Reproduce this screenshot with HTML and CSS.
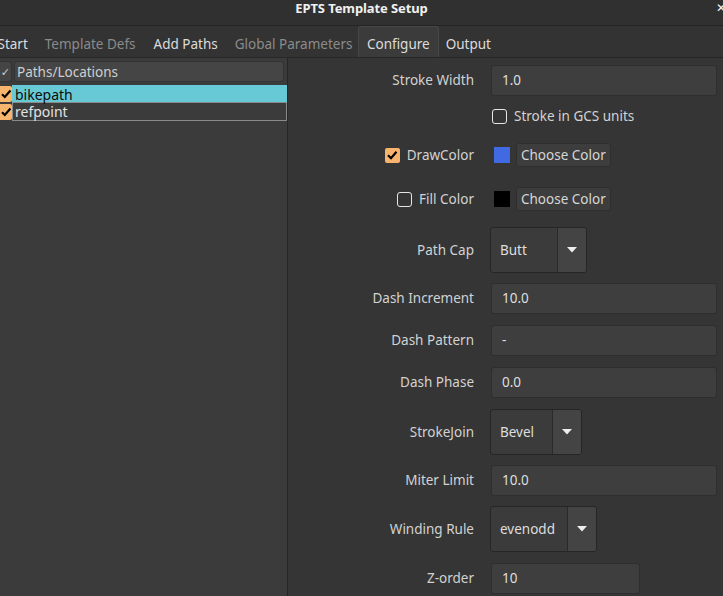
FILE: index.html
```html
<!DOCTYPE html>
<html>
<head>
<meta charset="utf-8">
<link rel="stylesheet" href="styles.css">
</head>
<body>
<div class="window">
  <div class="titlebar">
    <span></span>
    <span class="title">EPTS Template Setup</span>
    <span class="close">✕</span>
  </div>
  <div class="tabbar">
    <span class="tab">Start</span>
    <span class="tab disabled">Template Defs</span>
    <span class="tab">Add Paths</span>
    <span class="tab disabled">Global Parameters</span>
    <span class="tab active">Configure</span>
    <span class="tab">Output</span>
  </div>
  <div class="content">
    <div class="left">
      <div class="thead">
        <div class="th-check">✓</div>
        <div class="th-name">Paths/Locations</div>
      </div>
      <div class="trow">
        <div class="cell-check"><svg viewBox="0 0 12 12" width="12" height="12"><path d="M2 6.2 L4.8 9 L10.5 2.5" fill="none" stroke="#000" stroke-width="2.2"/></svg></div>
        <div class="cell-name selected">bikepath</div>
      </div>
      <div class="trow">
        <div class="cell-check"><svg viewBox="0 0 12 12" width="12" height="12"><path d="M2 6.2 L4.8 9 L10.5 2.5" fill="none" stroke="#000" stroke-width="2.2"/></svg></div>
        <div class="cell-name">refpoint</div>
      </div>
    </div>
    <div class="right">
      <div class="form">
        <div class="lbl">Stroke Width</div>
        <div class="fld"><div class="input wide">1.0</div></div>

        <div class="lbl"></div>
        <div class="fld"><span class="cb"></span><span class="cb-text">Stroke in GCS units</span></div>

        <div class="lbl"><span class="cb on"><svg viewBox="0 0 14 14" width="14" height="14"><path d="M3 7.2 L6 10.2 L11.5 3.8" fill="none" stroke="#000" stroke-width="2.2"/></svg></span><span class="cb-text">DrawColor</span></div>
        <div class="fld"><span class="swatch blue"></span><span class="btn">Choose Color</span></div>

        <div class="lbl"><span class="cb"></span><span class="cb-text">Fill Color</span></div>
        <div class="fld"><span class="swatch black"></span><span class="btn">Choose Color</span></div>

        <div class="lbl">Path Cap</div>
        <div class="fld"><div class="combo"><span class="combo-text w-butt">Butt</span><span class="combo-arrow"><svg width="10" height="6" viewBox="0 0 10 6"><path d="M0 0 H10 L5 5.5 Z" fill="#eee"/></svg></span></div></div>

        <div class="lbl">Dash Increment</div>
        <div class="fld"><div class="input wide">10.0</div></div>

        <div class="lbl">Dash Pattern</div>
        <div class="fld"><div class="input wide">-</div></div>

        <div class="lbl">Dash Phase</div>
        <div class="fld"><div class="input wide">0.0</div></div>

        <div class="lbl">StrokeJoin</div>
        <div class="fld"><div class="combo"><span class="combo-text w-bevel">Bevel</span><span class="combo-arrow"><svg width="10" height="6" viewBox="0 0 10 6"><path d="M0 0 H10 L5 5.5 Z" fill="#eee"/></svg></span></div></div>

        <div class="lbl">Miter Limit</div>
        <div class="fld"><div class="input wide">10.0</div></div>

        <div class="lbl">Winding Rule</div>
        <div class="fld"><div class="combo"><span class="combo-text w-even">evenodd</span><span class="combo-arrow"><svg width="10" height="6" viewBox="0 0 10 6"><path d="M0 0 H10 L5 5.5 Z" fill="#eee"/></svg></span></div></div>

        <div class="lbl">Z-order</div>
        <div class="fld"><div class="input short">10</div></div>
      </div>
    </div>
  </div>
</div>
</body>
</html>
```
FILE: styles.css
```css
* { box-sizing: border-box; }
html, body { margin: 0; padding: 0; }
body {
  width: 723px;
  height: 596px;
  overflow: hidden;
  background: #353535;
  font-family: "Noto Sans", "DejaVu Sans", sans-serif;
  font-size: 13.5px;
  color: #d6d6d6;
}
.window { display: flex; flex-direction: column; height: 596px; }

.titlebar {
  height: 26px;
  flex: 0 0 26px;
  background: #303030;
  border-bottom: 1px solid #242424;
  display: grid;
  grid-template-columns: 1fr auto 1fr;
  align-items: start;
}
.title { font-weight: bold; color: #f0f0f0; font-size: 13px; margin-top: -1px; letter-spacing: -0.1px; }
.close { justify-self: end; margin-right: -3px; margin-top: -1px; font-weight: bold; color: #f4f4f4; font-size: 12px; }

.tabbar {
  height: 32px;
  flex: 0 0 32px;
  background: #333333;
  border-bottom: 1px solid #262626;
  display: flex;
  align-items: flex-end;
  margin-left: -11px;
}
.tab {
  height: 31px;
  padding: 5px 8.5px 0;
  display: flex;
  align-items: center;
  color: #dcdcdc;
  white-space: nowrap;
}
.tab.disabled { color: #8b8b8b; }
.tab:nth-child(3) { padding-left: 9.5px; }
.tab.active {
  background: #3b3b3b;
  border: 1px solid #474747;
  border-bottom: none;
  border-radius: 3px 3px 0 0;
  padding: 4px 8px 0;
  margin: 0 0 0 -3px;
}
.tab.active + .tab { padding-left: 7px; }

.content { flex: 1; display: flex; min-height: 0; }
.left {
  width: 288px;
  flex: 0 0 288px;
  background: #3b3b3b;
  border-right: 1px solid #262626;
  padding-top: 3px;
}
.thead { display: flex; gap: 2px; height: 21px; margin-bottom: 3px; }
.th-check {
  width: 12px;
  background: #454545;
  border-radius: 0 3px 3px 0;
  color: #cfcfcf;
  font-size: 11px;
  display: flex; align-items: center; justify-content: flex-end;
  padding-right: 1px;
  border: 1px solid #333;
  border-left: none;
}
.th-name {
  width: 270px;
  background: #454545;
  border: 1px solid #333;
  border-radius: 3px;
  color: #cfcfcf;
  padding-left: 2px;
  display: flex; align-items: center;
}
.trow { display: flex; height: 18px; }
.cell-check {
  width: 12px;
  background: #f8b46d;
  border-radius: 0 2px 2px 0;
  display: flex; align-items: center; justify-content: center;
  margin: 1px 0;
}
.cell-name {
  width: 275px;
  border: 1px solid #8a8a8a;
  color: #e2e2e2;
  padding-left: 2px;
  display: flex; align-items: center;
  font-size: 14px;
}
.trow + .trow .cell-name { border-top: none; }
.cell-name.selected { background: #68c9d6; border-color: #68c9d6; color: #0c0c0c; border-bottom-color: #8a8a8a; }

.right { flex: 1; padding-top: 6px; }
.form {
  display: grid;
  grid-template-columns: 186px 232px;
  grid-template-rows: 32px 40px 38px 50px 52px 44px 40px 44px 56px 40px 58px 40px;
  column-gap: 17px;
}
.lbl {
  display: flex; align-items: center; justify-content: flex-end;
  color: #d2d2d2;
  white-space: nowrap;
}
.fld { display: flex; align-items: center; }
.input {
  height: 31px;
  background: #3e3e3e;
  border: 1px solid #2e2e2e;
  border-radius: 3px;
  padding-left: 10px;
  display: flex; align-items: center;
  color: #dedede;
}
.input.wide { width: 226px; }
.input.short { width: 149px; }

.cb {
  width: 15px; height: 15px;
  border: 1.5px solid #e6e6e6;
  border-radius: 3px;
  display: inline-flex; align-items: center; justify-content: center;
  margin-right: 7px;
  flex: 0 0 15px;
}
.fld .cb { margin-left: 1px; }
.cb.on { background: #f8b46d; border: none; border-radius: 2px; }
.cb-text { color: #d2d2d2; }

.swatch { width: 16px; height: 16px; margin: 0 6px 0 3px; }
.swatch.blue { background: #4169e1; }
.swatch.black { background: #000; }
.btn {
  height: 24px;
  padding: 0 4px 0 4px;
  background: #3d3d3d;
  border: 1px solid #2f2f2f;
  border-radius: 3px;
  display: inline-flex; align-items: center;
  color: #d6d6d6;
}

.combo {
  height: 46px;
  display: flex;
  background: #3b3b3b;
  border: 1px solid #262626;
  border-radius: 3px;
  margin-left: -1px;
  overflow: hidden;
}
.combo-text { display: flex; align-items: center; padding-left: 9px; color: #dedede; }
.w-butt { width: 66px; }
.w-bevel { width: 61px; }
.w-even { width: 76px; }
.combo-arrow {
  width: 29px;
  background: #444444;
  border-left: 1px solid #2a2a2a;
  display: flex; align-items: center; justify-content: center;
}
```
